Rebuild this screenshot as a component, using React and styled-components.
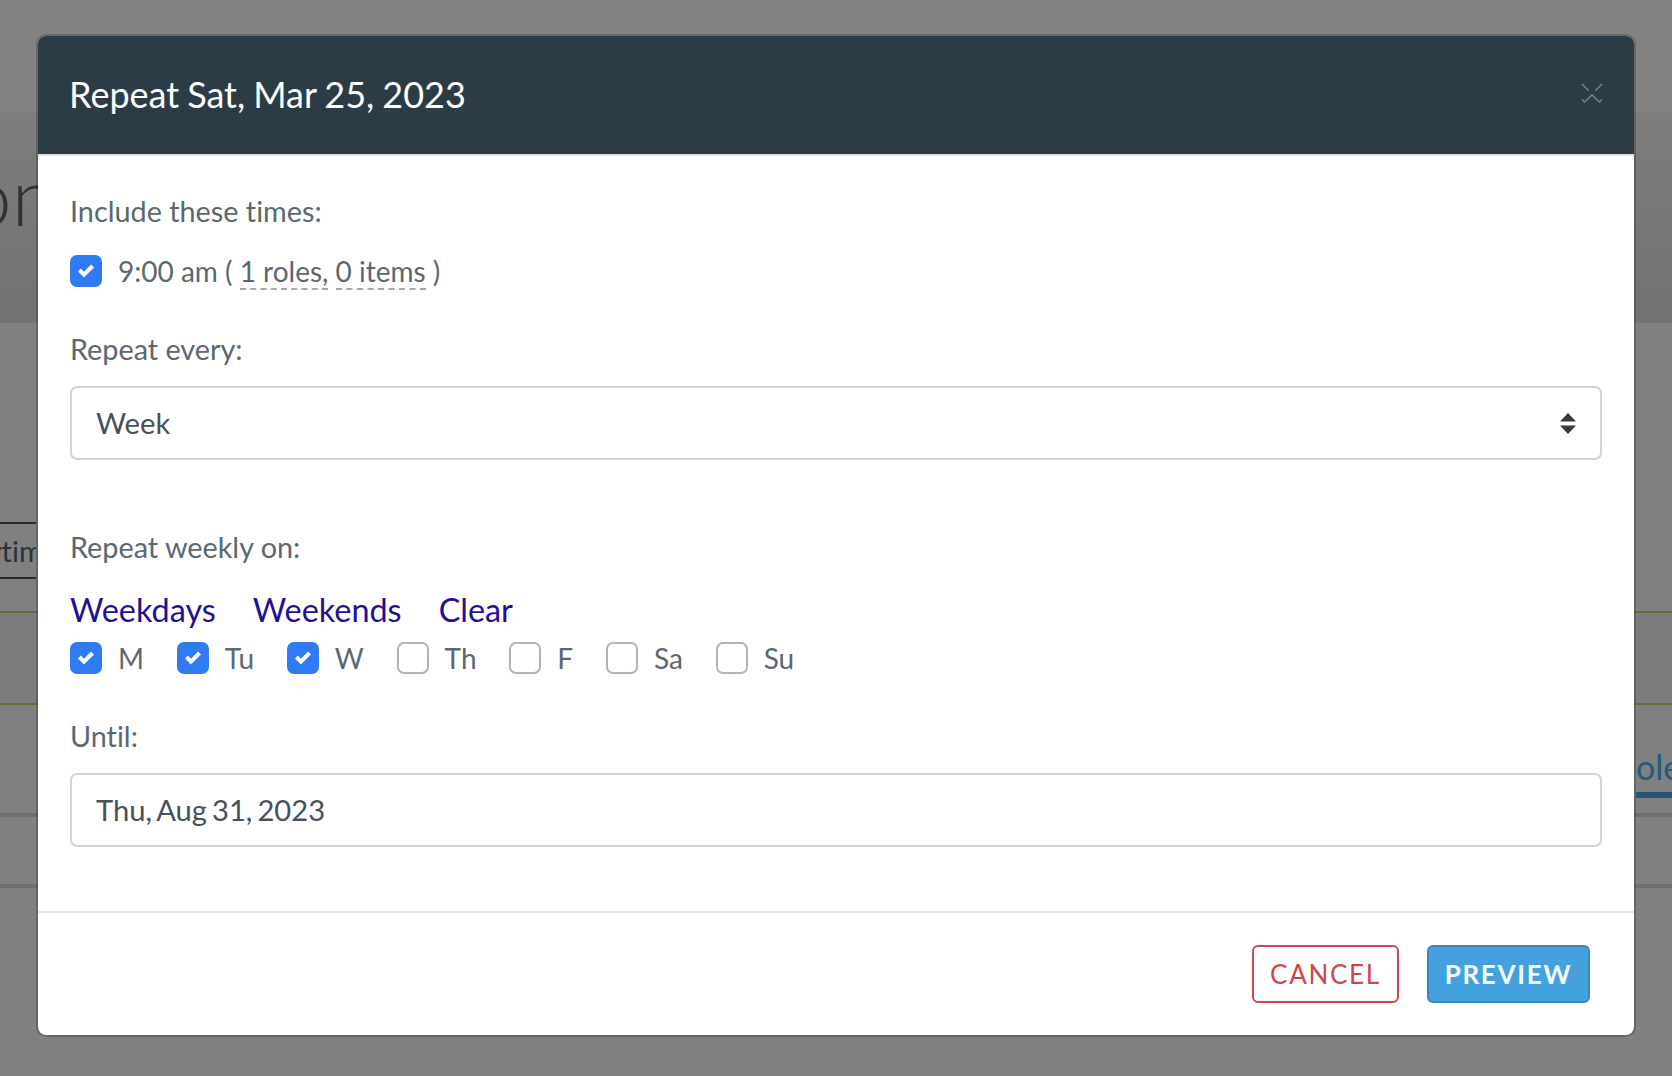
import styled, { createGlobalStyle } from "styled-components";

const GlobalStyle = createGlobalStyle`
  html, body { margin: 0; padding: 0; }
  body {
    font-family: Lato, "Open Sans", sans-serif;
    font-variant-ligatures: none;
    background: #808080;
    overflow: hidden;
  }
`;

const Screen = styled.div`
  position: relative;
  width: 1672px;
  height: 1076px;
  overflow: hidden;
  background: #808080;
`;

/* page behind the dialog, dimmed */
const TopBand = styled.div`
  height: 112px;
  background: #838383;
`;

const Hero = styled.div`
  height: 211px;
  background: linear-gradient(#7d7d7d, #727272);
  overflow: hidden;
`;

const HeroTitle = styled.div`
  font-size: 80px;
  font-weight: 300;
  line-height: 96px;
  color: #2b3338;
  margin: 35px 0 0 -33px;
`;

const FilterRow = styled.div`
  display: flex;
  margin-top: 199px;
  height: 57px;
`;

const FilterBox = styled.div`
  width: 36px;
  height: 57px;
  box-sizing: border-box;
  border-top: 2px solid #1f2e36;
  border-bottom: 2px solid #1f2e36;
  font-size: 29px;
  line-height: 53px;
  color: #2b3338;
  white-space: nowrap;
  overflow: hidden;
  text-indent: -9px;
`;

const GreenRow = styled.div`
  height: 94px;
  box-sizing: border-box;
  margin-top: 32px;
  border-top: 2px solid #5d7238;
  border-bottom: 2px solid #5d7238;
  background: #7c7c7c;
`;

const RolesTab = styled.div`
  display: flex;
  justify-content: flex-end;
  height: 93px;
  overflow: hidden;
`;

const RolesLabel = styled.div`
  width: 36px;
  height: 93px;
  box-sizing: border-box;
  border-bottom: 6px solid #235578;
  font-size: 34px;
  line-height: 40px;
  padding-top: 42px;
  color: #245a80;
  white-space: nowrap;
  overflow: hidden;
`;

const RuleOne = styled.div`
  height: 4px;
  margin-top: 15px;
  background: #6f6f6f;
`;

const RuleTwo = styled.div`
  height: 4px;
  margin-top: 67px;
  background: #6f6f6f;
`;

/* dialog */
const Overlay = styled.div`
  position: absolute;
  inset: 0;
  display: flex;
  justify-content: center;
  align-items: flex-start;
  padding-top: 34px;
`;

const Modal = styled.div`
  width: 1600px;
  height: 1003px;
  box-sizing: border-box;
  display: flex;
  flex-direction: column;
  background: #fff;
  background-clip: padding-box;
  border: 2px solid rgba(0, 0, 0, 0.2);
  border-radius: 10px;
`;

const Header = styled.header`
  flex: none;
  height: 120px;
  box-sizing: border-box;
  display: flex;
  align-items: center;
  justify-content: space-between;
  padding: 0 32px 2px 31px;
  background: #2c3c47;
  border-bottom: 2px solid #dee2e6;
  border-radius: 8px 8px 0 0;
`;

const Title = styled.h5`
  margin: 0;
  font-size: 36px;
  font-weight: 400;
  line-height: 44px;
  word-spacing: -1.2px;
  color: #fff;
`;

const CloseButton = styled.button`
  padding: 0;
  margin: 0 -1px 3px 0;
  display: flex;
  border: none;
  background: none;
  color: #7b878e;
`;

const Body = styled.div`
  flex: 1;
  padding: 34px 32px 0;
`;

const FieldLabel = styled.div`
  font-size: 28.8px;
  line-height: 42px;
  color: #5c6770;
  margin-top: ${(p) => p.$top || 0}px;
`;

const TimeRow = styled.div`
  display: flex;
  align-items: center;
  gap: 16px;
  height: 32px;
  margin-top: 23px;
  font-size: 28px;
  color: #5c6770;
`;

const Box = styled.span`
  flex: none;
  width: 32px;
  height: 32px;
  box-sizing: border-box;
  display: flex;
  align-items: center;
  justify-content: center;
  border-radius: 7px;
  background: ${(p) => (p.$checked ? "#2f7bf5" : "#fff")};
  border: ${(p) => (p.$checked ? "none" : "2px solid #adb5bd")};
`;

const Dashed = styled.span`
  border-bottom: 2px dashed #a3a9af;
`;

const Field = styled.div`
  height: 74px;
  box-sizing: border-box;
  margin-top: 16px;
  display: flex;
  align-items: center;
  justify-content: space-between;
  padding: 0 24px;
  border: 2px solid #ced4da;
  border-radius: 7px;
  font-size: 29.2px;
  word-spacing: -2.5px;
  color: #495057;
`;

const FieldValue = styled.span`
  margin-top: -2px;
`;

const QuickLinks = styled.div`
  display: flex;
  gap: 37px;
  margin-top: 20px;
  height: 44px;
  font-size: 32.4px;
  line-height: 44px;
  color: #1f1096;
`;

const DayRow = styled.div`
  display: flex;
  gap: 32.8px;
  margin-top: 10px;
  height: 32px;
`;

const Day = styled.label`
  display: flex;
  align-items: center;
  gap: 16px;
  font-size: 28px;
  color: #5c6770;
`;

const Footer = styled.footer`
  flex: none;
  height: 124px;
  box-sizing: border-box;
  display: flex;
  justify-content: flex-end;
  gap: 28px;
  padding: 32px 44px 0 0;
  border-top: 2px solid #e1e4e8;
`;

const ActionButton = styled.button`
  height: 58px;
  box-sizing: border-box;
  padding: 0;
  width: ${(p) => p.$width}px;
  border-radius: 6px;
  border: 2px solid ${(p) => (p.$primary ? "#3a87bc" : "#d0454c")};
  background: ${(p) => (p.$primary ? "#45a1de" : "#fff")};
  color: ${(p) => (p.$primary ? "#f6fbfe" : "#d0454c")};
  font-family: Lato, sans-serif;
  font-size: 26px;
  font-weight: ${(p) => (p.$primary ? 700 : 400)};
  letter-spacing: 1.7px;
`;

const Check = () => (
  <svg width="16" height="16" viewBox="0 0 8 8">
    <path
      fill="#fff"
      d="M6.564.75l-3.59 3.612-1.538-1.55L0 4.26 2.974 7.25 8 2.193z"
    />
  </svg>
);

const days = [
  { name: "M", on: true },
  { name: "Tu", on: true },
  { name: "W", on: true },
  { name: "Th" },
  { name: "F" },
  { name: "Sa" },
  { name: "Su" },
];

export default function App() {
  return (
    <Screen>
      <GlobalStyle />
      <TopBand />
      <Hero>
        <HeroTitle>on</HeroTitle>
      </Hero>
      <FilterRow>
        <FilterBox>rtime</FilterBox>
      </FilterRow>
      <GreenRow />
      <RolesTab>
        <RolesLabel>oles</RolesLabel>
      </RolesTab>
      <RuleOne />
      <RuleTwo />

      <Overlay>
        <Modal>
          <Header>
            <Title>Repeat Sat, Mar 25, 2023</Title>
            <CloseButton>
              <svg width="22" height="20" viewBox="0 0 22 20" fill="none" stroke="currentColor" strokeWidth="1.4">
                <path d="M1 1l6.5 6.5M21 1l-6.5 6.5M1 16.5l2.5 2.5L11 12l7.5 7 2.5-2.5" />
              </svg>
            </CloseButton>
          </Header>
          <Body>
            <FieldLabel>Include these times:</FieldLabel>
            <TimeRow>
              <Box $checked>
                <Check />
              </Box>
              <span>
                9:00 am ( <Dashed>1 roles,</Dashed> <Dashed>0 items</Dashed> )
              </span>
            </TimeRow>
            <FieldLabel $top={41}>Repeat every:</FieldLabel>
            <Field>
              <FieldValue>Week</FieldValue>
              <svg width="16" height="21" viewBox="0 0 16 21">
                <path fill="#343a40" d="M8 0l8 8.5H0zM0 12.5h16L8 21z" />
              </svg>
            </Field>
            <FieldLabel $top={66}>Repeat weekly on:</FieldLabel>
            <QuickLinks>
              <span>Weekdays</span>
              <span>Weekends</span>
              <span>Clear</span>
            </QuickLinks>
            <DayRow>
              {days.map((d) => (
                <Day key={d.name}>
                  <Box $checked={d.on}>{d.on && <Check />}</Box>
                  {d.name}
                </Day>
              ))}
            </DayRow>
            <FieldLabel $top={41}>Until:</FieldLabel>
            <Field>
              <FieldValue>Thu, Aug 31, 2023</FieldValue>
            </Field>
          </Body>
          <Footer>
            <ActionButton $width={147}>CANCEL</ActionButton>
            <ActionButton $primary $width={163}>PREVIEW</ActionButton>
          </Footer>
        </Modal>
      </Overlay>
    </Screen>
  );
}
